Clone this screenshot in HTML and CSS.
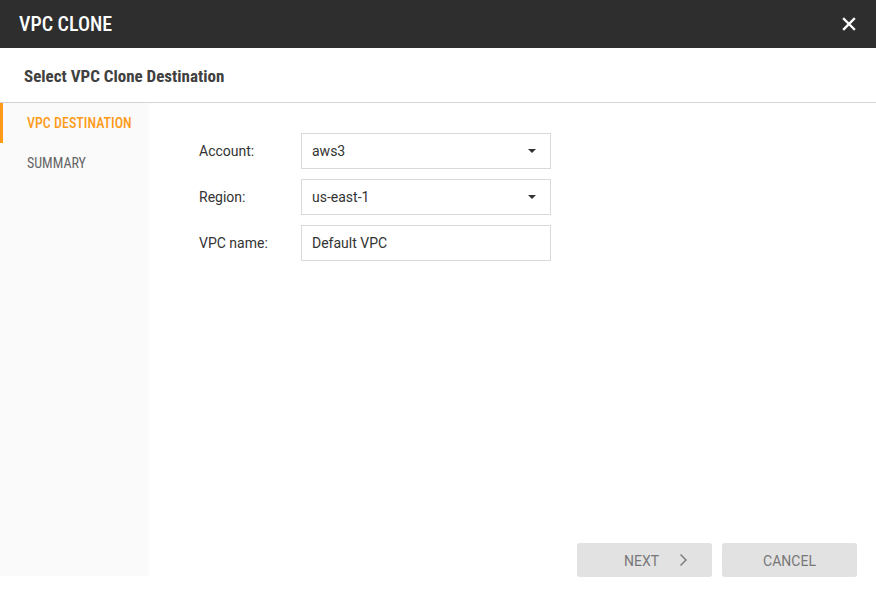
FILE: index.html
```html
<!DOCTYPE html>
<html>
<head>
<meta charset="utf-8">
<link rel="stylesheet" href="styles.css">
</head>
<body>
<div class="dialog">
  <header class="titlebar">
    <h1 class="title">VPC CLONE</h1>
    <button class="close" aria-label="Close">
      <svg width="14" height="14" viewBox="0 0 14 14"><path d="M2 2L12 12M12 2L2 12" stroke="#fff" stroke-width="2.4" stroke-linecap="square"/></svg>
    </button>
  </header>
  <div class="subheader">Select VPC Clone Destination</div>
  <div class="body">
    <nav class="steps">
      <div class="step active">VPC DESTINATION</div>
      <div class="step">SUMMARY</div>
    </nav>
    <main class="content">
      <form class="form">
        <label class="label">Account:</label>
        <div class="field select"><span>aws3</span><span class="caret"></span></div>
        <label class="label">Region:</label>
        <div class="field select"><span>us-east-1</span><span class="caret"></span></div>
        <label class="label">VPC name:</label>
        <div class="field"><span>Default VPC</span></div>
      </form>
      <div class="actions">
        <button class="btn next" type="button">NEXT
          <svg width="9" height="14" viewBox="0 0 9 14"><path d="M1.5 1.5L7 7L1.5 12.5" fill="none" stroke="#777" stroke-width="1.4"/></svg>
        </button>
        <button class="btn" type="button">CANCEL</button>
      </div>
    </main>
  </div>
</div>
</body>
</html>
```
FILE: styles.css
```css
* { box-sizing: border-box; }
html, body { margin: 0; padding: 0; background: #fff; }
body { font-family: Roboto, "Liberation Sans", Arial, sans-serif; width: 876px; height: 598px; overflow: hidden; }
.dialog { display: flex; flex-direction: column; height: 598px; }
.titlebar { height: 48px; background: #2e2e2e; display: flex; align-items: center; justify-content: space-between; padding: 0 20px 0 19px; flex: none; }
.title { margin: 0; color: #fff; font-size: 20px; font-weight: 500; font-stretch: condensed; }
.close { background: none; border: 0; padding: 0; width: 14px; height: 14px; display: flex; cursor: pointer; }
.subheader { height: 55px; flex: none; border-bottom: 1px solid #d4d4d4; padding: 1px 24px 0; display: flex; align-items: center; font-size: 17px; font-weight: 700; color: #404040; font-stretch: condensed; }
.body { display: flex; height: 473px; flex: none; }
.steps { width: 149px; background: #fafafa; flex: none; padding-top: 1px; }
.step { height: 40px; display: flex; align-items: center; padding-left: 27px; font-size: 14px; color: #666; font-stretch: condensed; }
.step.active { color: #ff9a1a; font-weight: 500; border-left: 3px solid #ff9a1a; padding-left: 24px; margin-top: -1px; }
.content { flex: 1; display: flex; flex-direction: column; justify-content: space-between; padding: 30px 19px 0 50px; }
.form { display: grid; grid-template-columns: 102px 250px; row-gap: 10px; align-items: center; }
.label { font-size: 14px; color: #333; }
.field { height: 36px; border: 1px solid #d9d9d9; background: #fff; display: flex; align-items: center; justify-content: space-between; padding: 0 14px 0 10px; font-size: 14px; color: #333; }
.caret { width: 0; height: 0; border-left: 4px solid transparent; border-right: 4px solid transparent; border-top: 4px solid #333; }
.actions { display: flex; justify-content: flex-end; gap: 10px; height: 34px; margin-bottom: -1px; }
.btn { width: 135px; height: 34px; border: 0; border-radius: 3px; background: #e2e2e2; color: #777; font-family: inherit; font-size: 14px; display: flex; align-items: center; justify-content: center; gap: 20px; padding: 0; padding-top: 2px; }
.btn.next { justify-content: flex-start; padding-left: 47px; }
.btn.next svg { margin-top: -2px; }
```
